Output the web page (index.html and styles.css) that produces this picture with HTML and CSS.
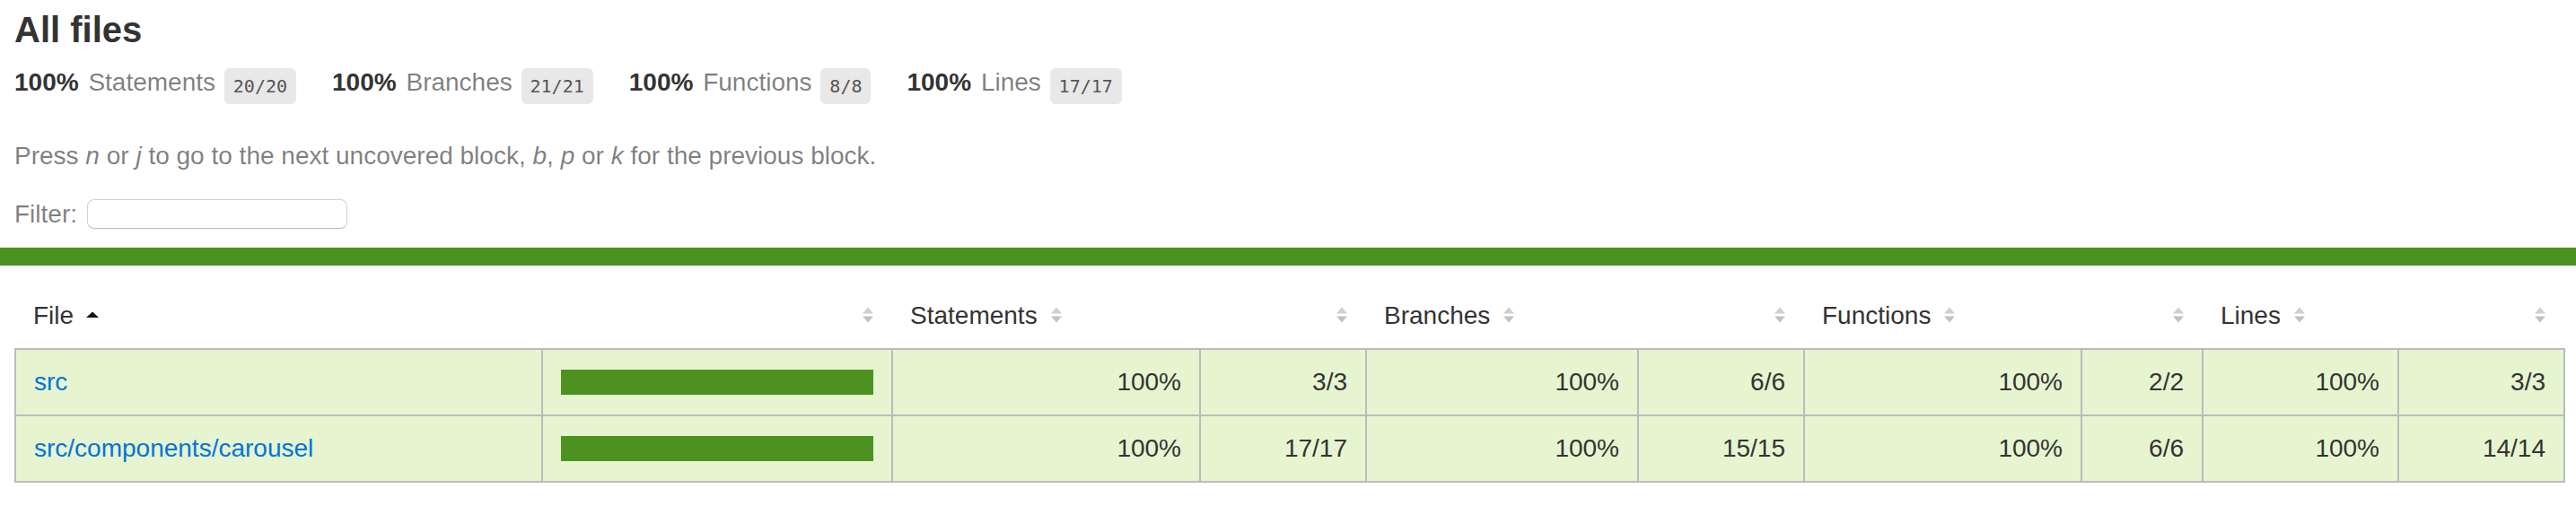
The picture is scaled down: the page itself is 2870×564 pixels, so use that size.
FILE: index.html
```html
<!DOCTYPE html>
<html lang="en">
<head>
<meta charset="utf-8">
<title>Code coverage report for All files</title>
<link rel="stylesheet" href="styles.css">
</head>
<body>
<div class="wrapper">
  <div class="top">
    <h1 class="title">All files</h1>
    <div class="summary">
      <div class="metric"><span class="strong">100%</span> <span class="quiet">Statements</span> <span class="fraction">20/20</span></div>
      <div class="metric"><span class="strong">100%</span> <span class="quiet">Branches</span> <span class="fraction">21/21</span></div>
      <div class="metric"><span class="strong">100%</span> <span class="quiet">Functions</span> <span class="fraction">8/8</span></div>
      <div class="metric"><span class="strong">100%</span> <span class="quiet">Lines</span> <span class="fraction">17/17</span></div>
    </div>
    <p class="quiet hint">Press <em>n</em> or <em>j</em> to go to the next uncovered block, <em>b</em>, <em>p</em> or <em>k</em> for the previous block.</p>
    <div class="quiet filter"><span>Filter:</span><input type="search" class="search" aria-label="Filter"></div>
  </div>
  <div class="status-line"></div>
  <div class="bottom">
    <table class="coverage-summary">
      <colgroup>
        <col class="c-file"><col class="c-pic"><col class="c-spct"><col class="c-sabs"><col class="c-bpct"><col class="c-babs"><col class="c-fpct"><col class="c-fabs"><col class="c-lpct"><col class="c-labs">
      </colgroup>
      <thead>
        <tr>
          <th class="file">File<svg class="sorter" viewBox="0 0 14 20" width="14" height="20"><polygon points="0,13 7,6.5 14,13" fill="#111"/></svg></th>
          <th class="pic"><svg class="sorter" viewBox="0 0 14 20" width="14" height="20"><polygon points="1,8.5 7,1.5 13,8.5" class="up"/><polygon points="1,11.5 13,11.5 7,18.5" class="down"/></svg></th>
          <th class="pct">Statements<svg class="sorter" viewBox="0 0 14 20" width="14" height="20"><polygon points="1,8.5 7,1.5 13,8.5" class="up"/><polygon points="1,11.5 13,11.5 7,18.5" class="down"/></svg></th>
          <th class="abs"><svg class="sorter" viewBox="0 0 14 20" width="14" height="20"><polygon points="1,8.5 7,1.5 13,8.5" class="up"/><polygon points="1,11.5 13,11.5 7,18.5" class="down"/></svg></th>
          <th class="pct">Branches<svg class="sorter" viewBox="0 0 14 20" width="14" height="20"><polygon points="1,8.5 7,1.5 13,8.5" class="up"/><polygon points="1,11.5 13,11.5 7,18.5" class="down"/></svg></th>
          <th class="abs"><svg class="sorter" viewBox="0 0 14 20" width="14" height="20"><polygon points="1,8.5 7,1.5 13,8.5" class="up"/><polygon points="1,11.5 13,11.5 7,18.5" class="down"/></svg></th>
          <th class="pct">Functions<svg class="sorter" viewBox="0 0 14 20" width="14" height="20"><polygon points="1,8.5 7,1.5 13,8.5" class="up"/><polygon points="1,11.5 13,11.5 7,18.5" class="down"/></svg></th>
          <th class="abs"><svg class="sorter" viewBox="0 0 14 20" width="14" height="20"><polygon points="1,8.5 7,1.5 13,8.5" class="up"/><polygon points="1,11.5 13,11.5 7,18.5" class="down"/></svg></th>
          <th class="pct">Lines<svg class="sorter" viewBox="0 0 14 20" width="14" height="20"><polygon points="1,8.5 7,1.5 13,8.5" class="up"/><polygon points="1,11.5 13,11.5 7,18.5" class="down"/></svg></th>
          <th class="abs"><svg class="sorter" viewBox="0 0 14 20" width="14" height="20"><polygon points="1,8.5 7,1.5 13,8.5" class="up"/><polygon points="1,11.5 13,11.5 7,18.5" class="down"/></svg></th>
        </tr>
      </thead>
      <tbody>
        <tr>
          <td class="file high"><a href="#">src</a></td>
          <td class="pic high"><div class="chart"><div class="cover-fill"></div></div></td>
          <td class="pct high">100%</td>
          <td class="abs high">3/3</td>
          <td class="pct high">100%</td>
          <td class="abs high">6/6</td>
          <td class="pct high">100%</td>
          <td class="abs high">2/2</td>
          <td class="pct high">100%</td>
          <td class="abs high">3/3</td>
        </tr>
        <tr>
          <td class="file high"><a href="#">src/components/carousel</a></td>
          <td class="pic high"><div class="chart"><div class="cover-fill"></div></div></td>
          <td class="pct high">100%</td>
          <td class="abs high">17/17</td>
          <td class="pct high">100%</td>
          <td class="abs high">15/15</td>
          <td class="pct high">100%</td>
          <td class="abs high">6/6</td>
          <td class="pct high">100%</td>
          <td class="abs high">14/14</td>
        </tr>
      </tbody>
    </table>
  </div>
</div>
</body>
</html>
```

FILE: styles.css
```css
*, *::before, *::after { box-sizing: border-box; }
html, body { margin: 0; padding: 0; }
body {
  font-family: "Liberation Sans", Arial, Helvetica, sans-serif;
  font-size: 28px;
  line-height: 32px;
  color: #333;
  background: #fff;
}
.top { padding: 10px 14px 21px 16px; }
.title { margin: 0; font-size: 40px; line-height: 46px; font-weight: bold; }
.summary { display: flex; }
.metric { padding: 20px 40px 20px 0; white-space: nowrap; }
.strong { font-weight: bold; margin-right: 3px; }
.quiet { color: rgba(0, 0, 0, 0.5); }
.fraction {
  font-family: "DejaVu Sans Mono", "Liberation Mono", monospace;
  font-size: 20px;
  line-height: 20px;
  color: #555;
  background: #e8e8e8;
  padding: 8px 10px;
  border-radius: 6px;
  vertical-align: -2px;
  margin-left: 2px;
}
.hint { margin: 30px 0 32px; }
.hint em { font-style: italic; }
.filter { display: flex; align-items: center; gap: 11px; }
.search {
  -webkit-appearance: none;
  appearance: none;
  width: 290px;
  height: 33px;
  margin: 0;
  border: 1px solid #d2d2d2;
  border-bottom-color: #bdbdbd;
  border-radius: 8px;
  background: #fff;
  box-shadow: 0 1px 0 rgba(0, 0, 0, 0.04);
}
.status-line { height: 20px; background: rgb(77, 146, 33); }
.bottom { padding: 20px 14px 20px 16px; }
.coverage-summary {
  width: 100%;
  border-collapse: collapse;
  table-layout: fixed;
}
.c-file { width: 587px; }
.c-pic { width: 390px; }
.c-spct { width: 343px; }
.c-sabs { width: 185px; }
.c-bpct { width: 303px; }
.c-babs { width: 185px; }
.c-fpct { width: 309px; }
.c-fabs { width: 135px; }
.c-lpct { width: 218px; }
.c-labs { width: 185px; }
.coverage-summary tbody { border: 2px solid #bbb; }
.coverage-summary tbody tr { border-bottom: 2px solid #bbb; }
.coverage-summary th,
.coverage-summary td { padding: 20px; line-height: 32px; }
.coverage-summary td { border-right: 2px solid #bbb; white-space: nowrap; }
.coverage-summary td:last-child { border-right: none; }
.coverage-summary th {
  text-align: left;
  font-weight: normal;
  white-space: nowrap;
  color: #333;
}
.coverage-summary th.pic,
.coverage-summary th.abs,
.coverage-summary td.pct,
.coverage-summary td.abs { text-align: right; }
.sorter {
  display: inline-block;
  width: 14px;
  height: 20px;
  margin-left: 14px;
  vertical-align: baseline;
}
.sorter .up { fill: #cfcfcf; }
.sorter .down { fill: #c2c2c2; }
.high { background: rgb(230, 245, 208); }
a { color: #0074d9; text-decoration: none; }
.coverage-summary td.pic { vertical-align: middle; }
.chart { height: 28px; display: flex; }
.cover-fill { width: 100%; height: 28px; background: rgb(77, 146, 33); }
```
